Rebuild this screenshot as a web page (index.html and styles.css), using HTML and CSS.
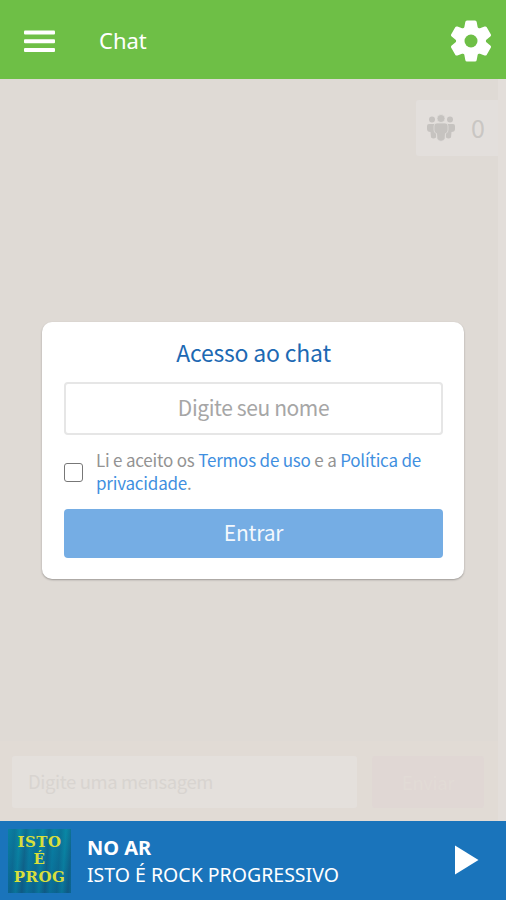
FILE: index.html
```html
<!DOCTYPE html>
<html lang="pt-BR">
<head>
    <meta charset="UTF-8">
    <meta name="viewport" content="width=device-width, initial-scale=1.0">
    <title>Chat</title>
    <link rel="stylesheet" href="styles.css">
</head>
<body>

    <header class="topbar">
        <button class="menu-btn" aria-label="Menu">
            <svg width="31" height="23" viewBox="0 0 31 23" fill="#fff">
                <rect y="0.5" width="31" height="4" rx="1"/>
                <rect y="9.2" width="31" height="4" rx="1"/>
                <rect y="18" width="31" height="4" rx="1"/>
            </svg>
        </button>
        <h1>Chat</h1>
        <button class="settings-btn" aria-label="Configurações">
            <svg width="40" height="42" viewBox="-20 -21 40 42">
                <g fill="#fff">
                    <circle r="15"/>
                    <path id="teeth" d="M-4-20.500h8q1.500 0 1.700 1.500L7-12V12L5.700 19q-.2 1.500-1.700 1.500h-8q-1.500 0-1.700-1.500L-7 12V-12L-5.700-19q.2-1.500 1.700-1.500z"/>
                    <use href="#teeth" transform="rotate(60)"/>
                    <use href="#teeth" transform="rotate(120)"/>
                </g>
                <circle r="6.500" fill="#6ebf46"/>
            </svg>
        </button>
    </header>

    <main class="chat">
        <div class="messages">
            <div class="online">
                <svg width="30" height="28" viewBox="0 0 30 28" fill="#c6c3c0">
                    <circle cx="6" cy="5.500" r="3"/>
                    <circle cx="24" cy="5.500" r="3"/>
                    <path d="M3 10h7v13.500q-2.500 2-5 0l-.5-5.500Q1 18 1 15v-3q0-2 2-2zM27 10h-7v13.500q2.500 2 5 0l.5-5.500q3.500 0 3.500-3v-3q0-2-2-2z"/>
                    <g stroke="#e3dfdc" stroke-width="0.7">
                        <circle cx="15" cy="4.500" r="4"/>
                        <path d="M11 9h8q3 0 3 3v4q0 3-2.500 3.500L19 25q-4 4.500-8 0l-.5-5.500Q8 19 8 16v-4q0-3 3-3z"/>
                    </g>
                </svg>
                <span>0</span>
            </div>
        </div>
        <div class="composer">
            <div class="message-input">Digite uma mensagem</div>
            <div class="send-btn">Enviar</div>
        </div>

        <form class="access">
            <h2>Acesso ao chat</h2>
            <input type="text" class="name-input" placeholder="Digite seu nome">
            <div class="terms">
                <input type="checkbox" id="accept" class="accept">
                <label for="accept">Li e aceito os <a>Termos de uso</a> e a <a>Política de privacidade</a>.</label>
            </div>
            <button type="button" class="enter-btn">Entrar</button>
        </form>
    </main>

    <footer class="player">
        <div class="cover">
            <span>ISTO</span>
            <span>É</span>
            <span>PROG</span>
        </div>
        <div class="track">
            <strong>NO AR</strong>
            <span>ISTO É ROCK PROGRESSIVO</span>
        </div>
        <button class="play-btn" aria-label="Tocar">
            <svg width="24" height="30" viewBox="0 0 24 30">
                <path fill="#fff" d="M0 .5L23.500 15 0 29.500z"/>
            </svg>
        </button>
    </footer>

</body>
</html>
```
FILE: styles.css
```css
* {
    box-sizing: border-box;
}
body {
    margin: 0;
    height: 100vh;
    display: flex;
    flex-direction: column;
    overflow: hidden;
    font-family: "Noto Sans", "Open Sans", sans-serif;
    background-color: #dfdad5;
}
button {
    padding: 0;
    border: none;
    background: none;
    cursor: pointer;
}
svg {
    display: block;
}
.topbar {
    height: 79px;
    padding: 3px 15px 0 24px;
    display: flex;
    align-items: center;
    flex-shrink: 0;
    background-color: #6ebf46;
    color: white;
}
.topbar h1 {
    flex: 1;
    margin: 0 0 2px 44px;
    font-size: 22px;
    font-weight: normal;
}
.chat {
    position: relative;
    flex: 1;
    display: flex;
    flex-direction: column;
    border-right: 8px solid #e3deda;
    font-family: "Noto Sans CJK SC", sans-serif;
}
.messages {
    flex: 1;
    padding-top: 21px;
}
.online {
    width: 82px;
    height: 56px;
    margin-left: auto;
    padding: 0 13px 0 10px;
    display: flex;
    align-items: center;
    justify-content: space-between;
    border-radius: 3px 0 0 3px;
    background-color: #e3dfdc;
    color: #c9c6c3;
    font-size: 25px;
}
.online span {
    padding-bottom: 2px;
}
.composer {
    height: 80px;
    padding: 15px 14px 13px 12px;
    display: flex;
    gap: 15px;
    background-color: #e1dbd5;
    font-size: 18.5px;
    letter-spacing: -0.4px;
}
.message-input {
    flex: 1;
    padding-left: 16px;
    line-height: 50px;
    border-radius: 3px;
    background-color: #e4e0dc;
    color: #d8d4d0;
}
.send-btn {
    width: 112px;
    line-height: 52px;
    text-align: center;
    border-radius: 3px;
    background-color: #e0d7d4;
    color: #e2dbd6;
}
/* Login card over the chat */
.access {
    position: absolute;
    top: 243px;
    left: 42px;
    width: 422px;
    height: 257px;
    padding: 12px 21px 21px 22px;
    border-radius: 10px;
    background-color: white;
    box-shadow: 0 1px 2px rgba(0, 0, 0, 0.3);
}
.access h2 {
    margin: 0 0 12px;
    text-align: center;
    font-size: 23px;
    font-weight: normal;
    line-height: 36px;
    letter-spacing: -0.2px;
    color: #1d69b3;
}
.name-input {
    display: block;
    width: 100%;
    height: 53px;
    padding: 0 0 4px;
    border: 2px solid #e6e6e6;
    border-radius: 4px;
    font-family: inherit;
    font-size: 21px;
    letter-spacing: -0.4px;
    text-align: center;
}
.name-input::placeholder {
    color: #a6a6a6;
}
.terms {
    margin: 14px 0;
    display: flex;
    align-items: center;
    gap: 13px;
    font-size: 17px;
    line-height: 23px;
    letter-spacing: -0.2px;
    color: #939393;
}
.terms label {
    margin-top: -1px;
    padding-bottom: 1px;
}
.terms a {
    color: #3f8fe0;
}
.accept {
    appearance: none;
    width: 19px;
    height: 19px;
    margin: 0;
    flex-shrink: 0;
    border: 1.500px solid #777;
    border-radius: 3px;
}
.enter-btn {
    width: 100%;
    height: 49px;
    padding-bottom: 3px;
    border-radius: 4px;
    background-color: #75ade4;
    color: #f3f8fd;
    font-family: inherit;
    font-size: 21px;
    letter-spacing: -0.2px;
}
.player {
    height: 79px;
    padding: 0 27px 0 8px;
    display: flex;
    align-items: center;
    flex-shrink: 0;
    background-color: #1a74bb;
    color: white;
}
.play-btn {
    margin-bottom: 2px;
}
.cover {
    width: 63px;
    height: 64px;
    padding-bottom: 1px;
    display: flex;
    flex-direction: column;
    align-items: center;
    justify-content: center;
    background: linear-gradient(rgba(10, 140, 170, 0.4), rgba(10, 90, 140, 0.4)), repeating-linear-gradient(94deg, #087ba0 0, #0d668d 7px, #0986a3 12px, #12587f 18px, #087ba0 23px);
    color: #d9df3c;
    font-family: "DejaVu Serif", serif;
    font-size: 15px;
    font-weight: bold;
    line-height: 17.500px;
    letter-spacing: 0.5px;
}
.track {
    flex: 1;
    padding-top: 1px;
    display: flex;
    flex-direction: column;
    margin-left: 16px;
    font-size: 20px;
    line-height: 27px;
}
.track span {
    font-size: 19.500px;
}
```
